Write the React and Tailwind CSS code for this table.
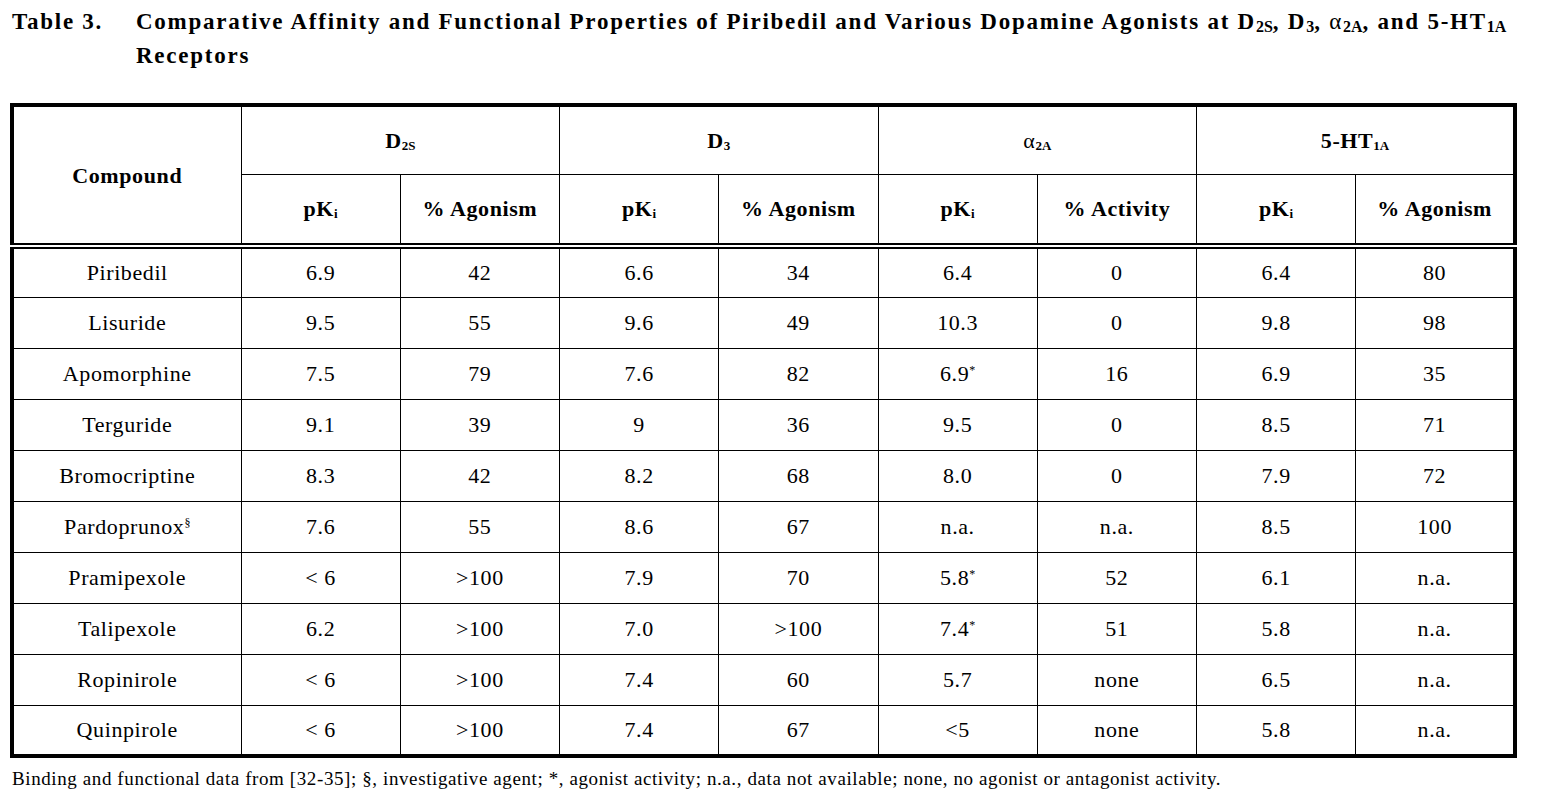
const rows = [
  ["Piribedil", "6.9", "42", "6.6", "34", "6.4", "0", "6.4", "80"],
  ["Lisuride", "9.5", "55", "9.6", "49", "10.3", "0", "9.8", "98"],
  ["Apomorphine", "7.5", "79", "7.6", "82", "6.9*", "16", "6.9", "35"],
  ["Terguride", "9.1", "39", "9", "36", "9.5", "0", "8.5", "71"],
  ["Bromocriptine", "8.3", "42", "8.2", "68", "8.0", "0", "7.9", "72"],
  ["Pardoprunox§", "7.6", "55", "8.6", "67", "n.a.", "n.a.", "8.5", "100"],
  ["Pramipexole", "< 6", ">100", "7.9", "70", "5.8*", "52", "6.1", "n.a."],
  ["Talipexole", "6.2", ">100", "7.0", ">100", "7.4*", "51", "5.8", "n.a."],
  ["Ropinirole", "< 6", ">100", "7.4", "60", "5.7", "none", "6.5", "n.a."],
  ["Quinpirole", "< 6", ">100", "7.4", "67", "<5", "none", "5.8", "n.a."],
];

// trailing * or § is drawn as a superscript mark
function Cell({ value }) {
  const last = value.slice(-1);
  if (last === "*" || last === "§") {
    return (
      <>
        {value.slice(0, -1)}
        <sup className="text-[12px] -top-[0.6em] tracking-normal">{last}</sup>
      </>
    );
  }
  return value;
}

const Sub = ({ children, big }) => (
  <sub
    className={
      big
        ? "text-[16px] bottom-[-0.2em] font-bold tracking-normal"
        : "text-[13px] bottom-[-0.15em] font-bold tracking-normal"
    }
  >
    {children}
  </sub>
);

const PKi = () => (
  <>
    pK<Sub>i</Sub>
  </>
);

export default function App() {
  const th = "border border-black font-bold text-center align-middle";
  const sub = `${th} border-b-[6px] border-double`;
  return (
    <div className="bg-white min-h-[805px] px-[10px] pt-[5px] text-black font-['Liberation_Serif',serif]">
      <div className="flex pl-[2px] text-[23px] tracking-[1.75px] font-bold leading-[34px]">
        <div className="w-[124px] shrink-0">Table 3.</div>
        <div>
          Comparative Affinity and Functional Properties of Piribedil and Various Dopamine Agonists at D
          <Sub big>2S</Sub>, D<Sub big>3</Sub>, <span className="font-normal">α</span>
          <Sub big>2A</Sub>, and 5-HT<Sub big>1A</Sub>
          <br />
          Receptors
        </div>
      </div>

      <table className="mt-[30px] w-[1507px] table-fixed border-collapse border-4 border-black text-[22px] tracking-[0.6px]">
        <colgroup>
          <col className="w-[229px]" />
          {Array.from({ length: 8 }).map((_, i) => (
            <col key={i} />
          ))}
        </colgroup>
        <thead>
          <tr className="h-[69px]">
            <th rowSpan={2} className={sub}>
              Compound
            </th>
            <th colSpan={2} className={th}>
              D<Sub>2S</Sub>
            </th>
            <th colSpan={2} className={th}>
              D<Sub>3</Sub>
            </th>
            <th colSpan={2} className={th}>
              <span className="font-normal">α</span>
              <Sub>2A</Sub>
            </th>
            <th colSpan={2} className={th}>
              5-HT<Sub>1A</Sub>
            </th>
          </tr>
          <tr className="h-[72px]">
            <th className={sub}><PKi /></th>
            <th className={sub}>% Agonism</th>
            <th className={sub}><PKi /></th>
            <th className={sub}>% Agonism</th>
            <th className={sub}><PKi /></th>
            <th className={sub}>% Activity</th>
            <th className={sub}><PKi /></th>
            <th className={sub}>% Agonism</th>
          </tr>
        </thead>
        <tbody>
          {rows.map((r) => (
            <tr key={r[0]} className="h-[51px]">
              {r.map((v, i) => (
                <td key={i} className="border border-black text-center align-middle">
                  <Cell value={v} />
                </td>
              ))}
            </tr>
          ))}
        </tbody>
      </table>

      <p className="mt-[11px] pl-[2px] text-[19px] tracking-[0.6px] leading-[20px]">
        Binding and functional data from [32-35]; §, investigative agent; *, agonist activity; n.a., data not
        available; none, no agonist or antagonist activity.
      </p>
    </div>
  );
}
